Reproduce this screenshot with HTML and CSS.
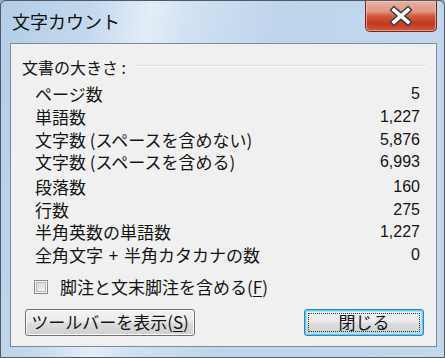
FILE: index.html
```html
<!DOCTYPE html>
<html lang="ja">
<head>
<meta charset="utf-8">
<link rel="stylesheet" href="styles.css">
</head>
<body>
<div class="window">
  <div class="titlebar">
    <span class="title">文字カウント</span>
    <div class="close">
      <svg width="72" height="30" viewBox="0 0 72 30">
        <path d="M29 9 L43 21 M43 9 L29 21" stroke="#3d3d3d" stroke-width="6.5" stroke-linecap="square" fill="none"/>
        <path d="M29 9 L43 21 M43 9 L29 21" stroke="#ffffff" stroke-width="3.6" stroke-linecap="square" fill="none"/>
      </svg>
    </div>
  </div>
  <div class="client">
    <div class="group-head"><span class="group-label">文書の大きさ :</span><div class="sep"></div></div>
    <div class="stats">
      <div class="row"><span>ページ数</span><span class="num">5</span></div>
      <div class="row"><span>単語数</span><span class="num">1,227</span></div>
      <div class="row"><span>文字数 (スペースを含めない)</span><span class="num">5,876</span></div>
      <div class="row"><span>文字数 (スペースを含める)</span><span class="num">6,993</span></div>
      <div class="row row-gap"><span>段落数</span><span class="num">160</span></div>
      <div class="row"><span>行数</span><span class="num">275</span></div>
      <div class="row"><span>半角英数の単語数</span><span class="num">1,227</span></div>
      <div class="row"><span>全角文字 <span class="plus">+</span> 半角カタカナの数</span><span class="num">0</span></div>
    </div>
    <div class="check"><span class="box"></span><span>脚注と文末脚注を含める(<u>F</u>)</span></div>
    <div class="buttons">
      <div class="btn toolbar">ツールバーを表示(<u>S</u>)</div>
      <div class="btn default"><span class="focus">閉じる</span></div>
    </div>
  </div>
</div>
</body>
</html>
```

FILE: styles.css
```css
html, body {
  margin: 0;
  padding: 0;
  width: 445px;
  height: 358px;
  overflow: hidden;
  background: #8fa9c4;
}

.window {
  box-sizing: border-box;
  width: 445px;
  height: 358px;
  display: flex;
  flex-direction: column;
  border: 1px solid #4e5a66;
  border-radius: 6px 6px 0 0;
  background: linear-gradient(100deg, #b3cde8 0%, #c3d8ee 18%, #e3edf8 30%, #d0e1f2 38%, #bfd5ec 55%, #c3d8ed 100%);
  font-family: "Noto Sans CJK JP", "Noto Sans", sans-serif;
  color: #141414;
}

.titlebar {
  height: 42px;
  display: flex;
  align-items: flex-start;
  flex-shrink: 0;
}

.title {
  font-size: 18px;
  line-height: 24px;
  padding: 8px 0 0 11px;
  color: #111;
}

.close {
  margin-left: auto;
  margin-right: 7px;
  width: 72px;
  height: 31px;
  box-sizing: border-box;
  border: 1px solid #6e2b20;
  border-top: none;
  border-radius: 0 0 5px 5px;
  background: linear-gradient(180deg, #e9b0a3 0%, #e19583 35%, #cf5a41 50%, #c1391f 75%, #d4573a 100%);
  box-shadow: inset 0 0 0 1px rgba(255, 210, 195, 0.55);
  overflow: hidden;
}

.close svg {
  display: block;
  margin: 0 0 0 -1px;
}

.client {
  flex: 1;
  margin: 0 7px 10px 9px;
  border: 1px solid #7d8a97;
  background: #f0f0f0;
  padding: 13px 9px 0 11px;
  display: flex;
  flex-direction: column;
}

.group-head {
  display: flex;
  align-items: center;
  height: 20px;
}

.group-label {
  font-size: 16px;
  line-height: 20px;
  white-space: nowrap;
}

.sep {
  flex: 1;
  height: 0;
  border-top: 1px solid #d5dfe5;
  border-bottom: 1px solid #ffffff;
  margin-left: 8px;
  margin-top: -3px;
}

.stats {
  margin-top: 6px;
  padding: 0 7px 0 13px;
  display: flex;
  flex-direction: column;
}

.row {
  height: 22.7px;
  display: flex;
  align-items: center;
  justify-content: space-between;
  font-size: 17px;
  line-height: 20px;
  white-space: nowrap;
}

.row-gap {
  margin-top: 2px;
}

.plus {
  padding: 0 2px;
}

.num {
  font-family: "Liberation Sans", "DejaVu Sans", sans-serif;
  font-size: 16px;
}

.check {
  margin-top: 9px;
  padding-left: 12px;
  display: flex;
  align-items: center;
  height: 22px;
  font-size: 17px;
  white-space: nowrap;
}

.box {
  width: 14px;
  height: 14px;
  box-sizing: border-box;
  border: 1px solid #8a8a8a;
  background: linear-gradient(135deg, #cfcfcf 0%, #e8e8e8 55%, #f8f8f8 100%);
  box-shadow: inset 0 0 0 1px #f4f4f4, inset 0 0 0 2px #b9b9b9;
  margin-right: 12px;
}

u {
  text-decoration: underline;
  text-underline-offset: 2px;
}

.buttons {
  margin-top: 11px;
  display: flex;
  justify-content: space-between;
  padding: 0 3px 0 3px;
}

.btn {
  height: 27px;
  box-sizing: border-box;
  border: 1px solid #707070;
  border-radius: 3px;
  background: linear-gradient(180deg, #f2f2f2 0%, #ebebeb 48%, #dddddd 52%, #cfcfcf 100%);
  box-shadow: inset 0 0 0 1px #fcfcfc;
  font-size: 17px;
  line-height: 24px;
  display: flex;
  align-items: center;
  justify-content: center;
  white-space: nowrap;
}

.toolbar {
  width: 170px;
}

.default {
  width: 120px;
  border-color: #3c7fb1;
  box-shadow: inset 0 0 0 1px #48d8fb, inset 0 0 0 2px #a5e5fb;
  padding: 3px;
}

.focus {
  flex: 1;
  align-self: stretch;
  border: 1px dotted #333;
  display: flex;
  align-items: center;
  justify-content: center;
  line-height: 18px;
}
```
